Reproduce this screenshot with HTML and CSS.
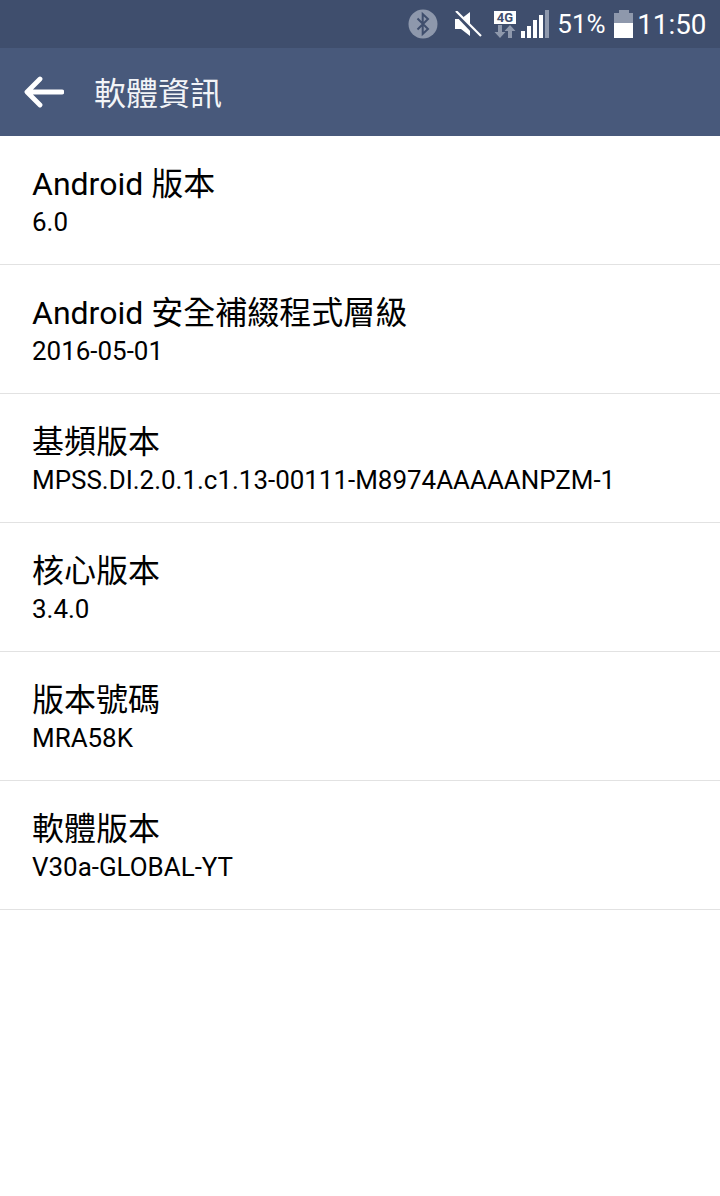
FILE: index.html
```html
<!DOCTYPE html>
<html lang="zh-Hant">
<head>
    <meta charset="UTF-8">
    <meta name="viewport" content="width=device-width, initial-scale=1.0">
    <title>軟體資訊</title>
    <link rel="stylesheet" href="styles.css">
</head>
<body>

    <!-- Status bar -->
    <div class="status-bar">
        <svg class="icon-bt" width="30" height="30" viewBox="0 0 30 30">
            <circle cx="15" cy="15" r="14.5" fill="#8e98ac"/>
            <path d="M9.5 9.5 L20 20 L14.7 25 V5 L20 10 L9.5 20.5" fill="none" stroke="#3f4e6d" stroke-width="2"/>
        </svg>
        <svg class="icon-mute" width="28" height="26" viewBox="0 0 28 26">
            <path d="M1 8 H7 L16 1 V25 L7 18 H1 Z" fill="#fff"/>
            <path d="M2 2 L25 26" stroke="#3f4e6d" stroke-width="4.5"/>
            <path d="M2 0 L27 25" stroke="#fff" stroke-width="2.2"/>
        </svg>
        <div class="icon-net">
            <span class="net-label">4G</span>
            <svg width="22" height="13" viewBox="0 0 22 13">
                <path d="M4 0 H8 V7 H11.5 L6 13 L0.5 7 H4 Z" fill="#8e98ac"/>
                <path d="M14 13 H18 V6 H21.5 L16 0 L10.5 6 H14 Z" fill="#8e98ac"/>
            </svg>
        </div>
        <div class="icon-signal">
            <span class="bar bar-1"></span>
            <span class="bar bar-2"></span>
            <span class="bar bar-3"></span>
            <span class="bar bar-4"></span>
            <span class="bar bar-5"></span>
        </div>
        <span class="status-pct">51%</span>
        <div class="icon-battery">
            <span class="battery-cap"></span>
            <span class="battery-empty"></span>
            <span class="battery-fill"></span>
        </div>
        <span class="status-time">11:50</span>
    </div>

    <!-- Action bar -->
    <div class="action-bar">
        <svg class="back-arrow" width="40" height="32" viewBox="0 0 40 32">
            <path d="M38 16 H4 M16 3 L3 16 L16 29" fill="none" stroke="#fff" stroke-width="4.8" stroke-linecap="round" stroke-linejoin="round"/>
        </svg>
        <h1 class="action-title">軟體資訊</h1>
    </div>

    <!-- Info list -->
    <div class="info-list">
        <div class="info-row">
            <div class="info-title">Android 版本</div>
            <div class="info-value">6.0</div>
        </div>
        <div class="info-row">
            <div class="info-title">Android 安全補綴程式層級</div>
            <div class="info-value">2016-05-01</div>
        </div>
        <div class="info-row">
            <div class="info-title">基頻版本</div>
            <div class="info-value">MPSS.DI.2.0.1.c1.13-00111-M8974AAAAANPZM-1</div>
        </div>
        <div class="info-row">
            <div class="info-title">核心版本</div>
            <div class="info-value">3.4.0</div>
        </div>
        <div class="info-row">
            <div class="info-title">版本號碼</div>
            <div class="info-value">MRA58K</div>
        </div>
        <div class="info-row">
            <div class="info-title">軟體版本</div>
            <div class="info-value">V30a-GLOBAL-YT</div>
        </div>
    </div>

</body>
</html>
```
FILE: styles.css
```css
body {
    margin: 0;
    min-height: 1196px;
    background-color: #fff;
    color: #000;
    font-family: Roboto, "Noto Sans CJK TC", sans-serif;
}
.status-bar {
    display: flex;
    align-items: center;
    height: 48px;
    padding: 0 14px 0 408px;
    box-sizing: border-box;
    background-color: #3f4e6d;
    color: #fff;
}
.icon-bt {
    flex: none;
}
.icon-mute {
    flex: none;
    margin-left: 16px;
}
.icon-net {
    display: flex;
    flex-direction: column;
    align-items: center;
    gap: 1px;
    width: 22px;
    margin-left: 12px;
}
.net-label {
    width: 22px;
    height: 13px;
    background-color: #fff;
    color: #3f4e6d;
    font-size: 13px;
    font-weight: 700;
    line-height: 13px;
    text-align: center;
}
.icon-signal {
    display: flex;
    align-items: flex-end;
    gap: 1.6px;
    height: 28px;
    margin-left: 5px;
}
.bar {
    width: 4.4px;
    background-color: #fff;
}
.bar-1 { height: 7px; }
.bar-2 { height: 12px; }
.bar-3 { height: 18px; }
.bar-4 { height: 23px; }
.bar-5 { height: 28px; background-color: #8e98ac; }
.status-pct {
    margin-left: 8px;
    font-size: 26px;
}
.icon-battery {
    display: flex;
    flex-direction: column;
    align-items: center;
    width: 19px;
    margin-left: 8.6px;
}
.battery-cap {
    width: 10px;
    height: 3px;
    background-color: #8e98ac;
}
.battery-empty {
    width: 19px;
    height: 10px;
    background-color: #8e98ac;
}
.battery-fill {
    width: 19px;
    height: 15px;
    background-color: #fff;
}
.status-time {
    margin-left: 4px;
    font-size: 27.8px;
}
.action-bar {
    display: flex;
    align-items: center;
    height: 88px;
    padding-left: 24px;
    background-color: #48597b;
}
.back-arrow {
    flex: none;
}
.action-title {
    margin: -2px 0 0 30px;
    color: #f2f4f7;
    font-size: 32px;
    font-weight: 400;
}
.info-row {
    height: 129px;
    padding: 28px 32px 0;
    box-sizing: border-box;
    border-bottom: 1px solid #e2e2e2;
}
.info-title {
    font-size: 32px;
    line-height: 40px;
}
.info-value {
    font-size: 25.95px;
    line-height: 36px;
}
```
